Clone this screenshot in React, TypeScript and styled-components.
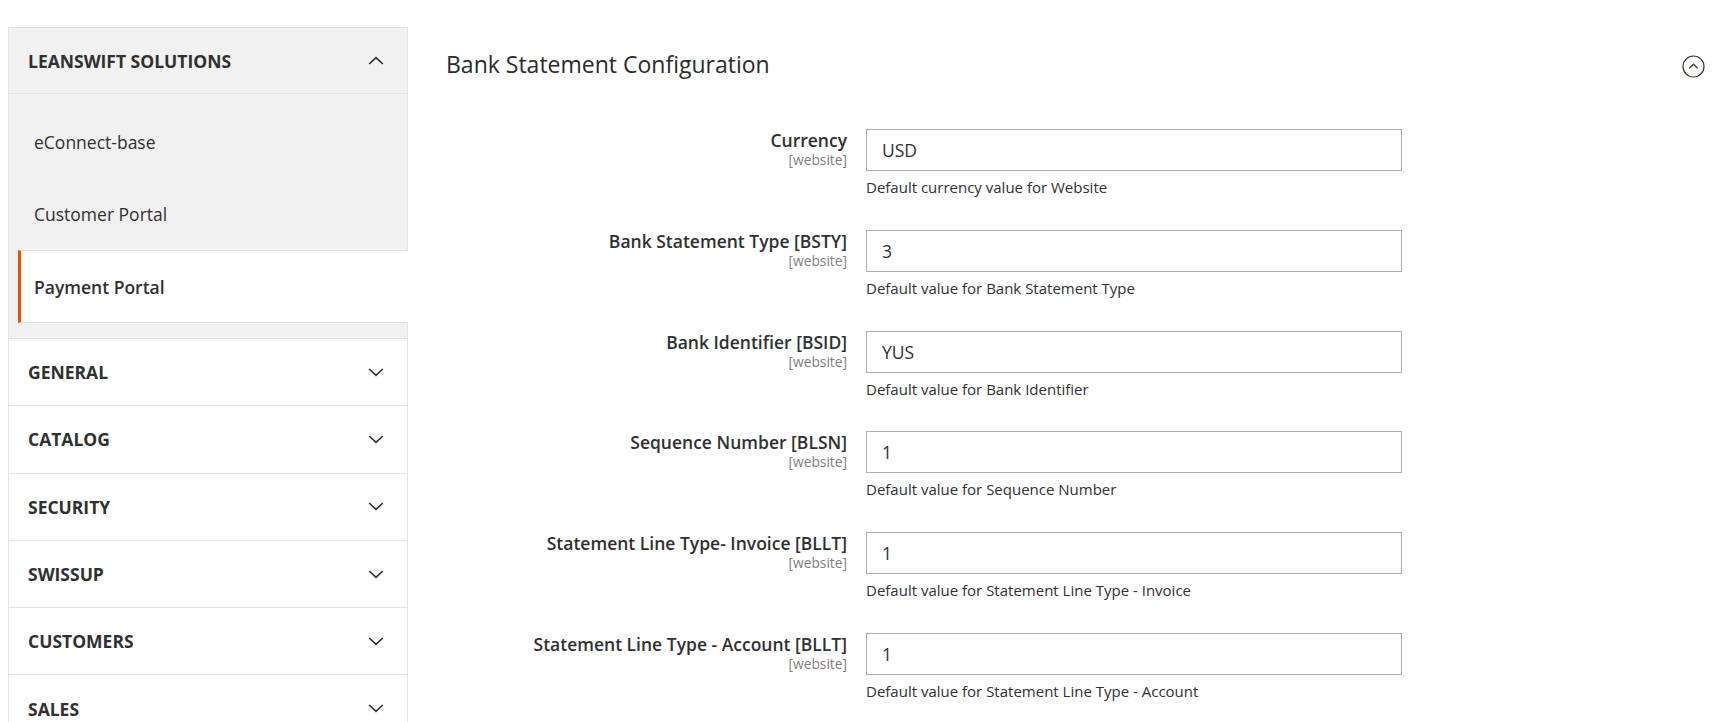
import React from "react";
import styled, { createGlobalStyle } from "styled-components";

const GlobalStyle = createGlobalStyle`
  html, body { margin: 0; padding: 0; background: #ffffff; }
  body { font-family: "Open Sans", "Noto Sans", Arial, sans-serif; color: #303030; }
  * { box-sizing: border-box; }
`;

const Page = styled.div`
  display: flex;
  align-items: flex-start;
  padding: 27px 0 0 8px;
  min-height: 722px;
`;

const Sidebar = styled.nav`
  width: 400px;
  flex: none;
  display: flex;
  flex-direction: column;
`;

const OpenBlock = styled.div`
  background: #f1f1f1;
  border: 1px solid #e3e3e3;
  border-bottom: none;
`;

const SectionTitle = styled.div<{ $open?: boolean }>`
  display: flex;
  align-items: center;
  justify-content: space-between;
  height: ${(p) => (p.$open ? "66px" : "66.3px")};
  padding: 0 23px 0 19px;
  font-size: 17.5px;
  font-weight: 700;
  color: #303030;
  border-bottom: ${(p) => (p.$open ? "1px solid #e3e3e3" : "none")};
`;

const Items = styled.ul`
  list-style: none;
  margin: 0;
  padding: 12px 0 15px 0;
`;

const Item = styled.li<{ $active?: boolean }>`
  display: flex;
  align-items: center;
  height: ${(p) => (p.$active ? "73px" : "72px")};
  margin-left: 9px;
  padding-left: ${(p) => (p.$active ? "13px" : "16px")};
  font-size: 17.5px;
  font-weight: ${(p) => (p.$active ? 600 : 400)};
  color: #303030;
  background: ${(p) => (p.$active ? "#ffffff" : "transparent")};
  border-left: ${(p) => (p.$active ? "3px solid #eb5202" : "none")};
  border-top: ${(p) => (p.$active ? "1px solid #e3e3e3" : "none")};
  border-bottom: ${(p) => (p.$active ? "1px solid #e3e3e3" : "none")};
  margin-right: ${(p) => (p.$active ? "-1px" : "0")};
`;

const ClosedBlock = styled.div`
  background: #ffffff;
  border-left: 1px solid #e3e3e3;
  border-right: 1px solid #e3e3e3;
  border-top: 1px solid #e3e3e3;
`;

const Main = styled.main`
  flex: 1;
  min-width: 0;
  padding: 0 12px 0 38px;
`;

const TitleBar = styled.div`
  display: flex;
  align-items: center;
  justify-content: space-between;
  height: 76px;
`;

const Title = styled.h2`
  margin: 0;
  font-size: 23px;
  font-weight: 400;
  color: #2b2b2b;
  line-height: 1.2;
`;

const Form = styled.div`
  display: flex;
  flex-direction: column;
  gap: 32.8px;
  padding-top: 26px;
`;

const Row = styled.div`
  display: grid;
  grid-template-columns: 401px 536px;
  column-gap: 19px;
  align-items: start;
`;

const LabelCol = styled.div`
  display: flex;
  flex-direction: column;
  align-items: flex-end;
  text-align: right;
  margin-top: -1px;
`;

const Label = styled.label`
  font-size: 17.5px;
  font-weight: 600;
  line-height: 24px;
  color: #303030;
  white-space: nowrap;
`;

const Scope = styled.span`
  font-size: 13.75px;
  line-height: 15px;
  color: #808080;
`;

const Control = styled.div`
  display: flex;
  flex-direction: column;
`;

const TextInput = styled.input`
  height: 42px;
  width: 100%;
  border: 1px solid #adadad;
  border-radius: 0;
  padding: 0 15px;
  font-family: "Open Sans", "Noto Sans", Arial, sans-serif;
  font-size: 17.5px;
  color: #303030;
  background: #ffffff;
  outline: none;
`;

const Note = styled.div`
  margin-top: 6px;
  font-size: 15px;
  line-height: 20px;
  color: #303030;
`;

const CollapseButton = styled.button`
  width: 23px;
  height: 23px;
  padding: 0;
  border: none;
  background: none;
  display: flex;
  align-items: center;
  justify-content: center;
  color: #303030;
  margin-top: 2px;
`;

const Chevron = ({ up }: { up?: boolean }) => (
  <svg width="16" height="9" viewBox="0 0 16 9" aria-hidden>
    <path
      d={up ? "M1.2 8 L8 1.6 L14.8 8" : "M1.2 1 L8 7.4 L14.8 1"}
      fill="none"
      stroke="#303030"
      strokeWidth="1.7"
    />
  </svg>
);

const CircleUp = () => (
  <svg width="23" height="23" viewBox="0 0 23 23" aria-hidden>
    <circle cx="11.5" cy="11.5" r="10.5" fill="none" stroke="#41362f" strokeWidth="1.2" />
    <path d="M7.3 13.2 L11.5 9.2 L15.7 13.2" fill="none" stroke="#41362f" strokeWidth="1.3" />
  </svg>
);

const subItems = [
  { name: "eConnect-base" },
  { name: "Customer Portal" },
  { name: "Payment Portal", active: true },
];

const sections = ["GENERAL", "CATALOG", "SECURITY", "SWISSUP", "CUSTOMERS", "SALES"];

const fields = [
  { label: "Currency", value: "USD", note: "Default currency value for Website" },
  { label: "Bank Statement Type [BSTY]", value: "3", note: "Default value for Bank Statement Type" },
  { label: "Bank Identifier [BSID]", value: "YUS", note: "Default value for Bank Identifier" },
  { label: "Sequence Number [BLSN]", value: "1", note: "Default value for Sequence Number" },
  {
    label: "Statement Line Type- Invoice [BLLT]",
    value: "1",
    note: "Default value for Statement Line Type - Invoice",
  },
  {
    label: "Statement Line Type - Account [BLLT]",
    value: "1",
    note: "Default value for Statement Line Type - Account",
  },
];

export default function App() {
  return (
    <>
      <GlobalStyle />
      <Page>
        <Sidebar>
          <OpenBlock>
            <SectionTitle $open>
              <span>LEANSWIFT SOLUTIONS</span>
              <Chevron up />
            </SectionTitle>
            <Items>
              {subItems.map((it) => (
                <Item key={it.name} $active={it.active}>
                  {it.name}
                </Item>
              ))}
            </Items>
          </OpenBlock>
          {sections.map((s) => (
            <ClosedBlock key={s}>
              <SectionTitle>
                <span>{s}</span>
                <Chevron />
              </SectionTitle>
            </ClosedBlock>
          ))}
        </Sidebar>
        <Main>
          <TitleBar>
            <Title>Bank Statement Configuration</Title>
            <CollapseButton aria-label="Collapse">
              <CircleUp />
            </CollapseButton>
          </TitleBar>
          <Form>
            {fields.map((f, i) => (
              <Row key={i}>
                <LabelCol>
                  <Label htmlFor={`f${i}`}>{f.label}</Label>
                  <Scope>[website]</Scope>
                </LabelCol>
                <Control>
                  <TextInput id={`f${i}`} defaultValue={f.value} />
                  <Note>{f.note}</Note>
                </Control>
              </Row>
            ))}
          </Form>
        </Main>
      </Page>
    </>
  );
}
